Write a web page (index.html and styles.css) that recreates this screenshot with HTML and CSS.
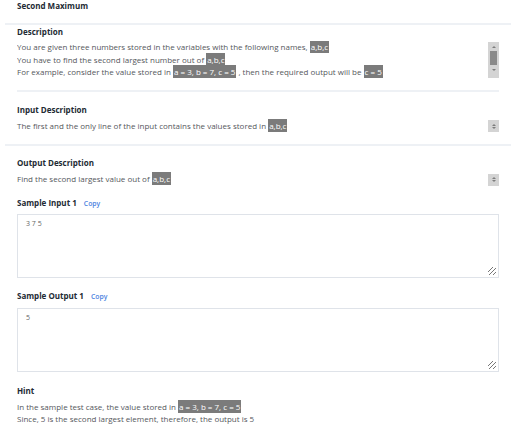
FILE: index.html
```html
<!DOCTYPE html>
<html>
<head>
<meta charset="utf-8">
<link rel="stylesheet" href="styles.css">
</head>
<body>
<div class="page">
  <div class="title">Second Maximum</div>
  <div class="rule wide"></div>

  <div class="section sec-desc">
    <div class="heading">Description</div>
    <div class="row desc-row">
      <div class="text scroll-text">
        <div>You are given three numbers stored in the variables with the following names, <span class="code">a,b,c</span></div>
        <div>You have to find the second largest number out of <span class="code">a,b,c</span></div>
        <div>For example, consider the value stored in <span class="code">a = 3, b = 7, c = 5</span> , then the required output will be <span class="code">c = 5</span></div>
      </div>
      <div class="vscroll">
        <span class="arrow up"></span>
        <span class="thumb"></span>
        <span class="arrow down"></span>
      </div>
    </div>
  </div>
  <div class="rule"></div>

  <div class="section sec-in">
    <div class="heading">Input Description</div>
    <div class="row line-row">
      <div class="text">The first and the only line of the input contains the values stored in <span class="code">a,b,c</span></div>
      <div class="spin"><span class="arrow up"></span><span class="arrow down"></span></div>
    </div>
  </div>
  <div class="rule wide"></div>

  <div class="section sec-out">
    <div class="heading">Output Description</div>
    <div class="row line-row">
      <div class="text">Find the second largest value out of <span class="code">a,b,c</span></div>
      <div class="spin"><span class="arrow up"></span><span class="arrow down"></span></div>
    </div>
  </div>

  <div class="sample sample-in">
    <div class="heading">Sample Input 1 <span class="copy">Copy</span></div>
    <div class="box">3 7 5<span class="grip"></span></div>
  </div>

  <div class="sample sample-out">
    <div class="heading">Sample Output 1 <span class="copy">Copy</span></div>
    <div class="box">5<span class="grip"></span></div>
  </div>

  <div class="section hint">
    <div class="heading">Hint</div>
    <div class="text">
      <div>In the sample test case, the value stored in <span class="code">a = 3, b = 7, c = 5</span></div>
      <div>Since, 5 is the second largest element, therefore, the output is 5</div>
    </div>
  </div>
</div>
</body>
</html>
```

FILE: styles.css
```css
html, body {
  margin: 0;
  padding: 0;
  background: #ffffff;
}
body {
  font-family: "Open Sans", "Noto Sans", sans-serif;
  font-size: 8px;
  color: #55575c;
}
.page {
  padding: 0 19px 0 17px;
}
.title {
  font-weight: 700;
  font-size: 8px;
  color: #222a33;
  line-height: 12px;
  height: 23px;
}
.rule {
  height: 2px;
  background: #eef1f5;
}
.rule.wide {
  margin: 0 -12px;
}
.heading {
  font-weight: 700;
  font-size: 8px;
  color: #222a33;
  line-height: 12px;
}
.row {
  display: flex;
  align-items: flex-start;
}
.text {
  line-height: 12.5px;
  flex: 1;
  white-space: nowrap;
}
.code {
  background: #7b7b7b;
  color: #ffffff;
  padding: 1px 1px;
}

/* description */
.sec-desc {
  padding-top: 1px;
}
.desc-row {
  margin-top: 3px;
  height: 37px;
  margin-bottom: 12px;
}
.scroll-text {
  height: 37px;
  overflow: hidden;
}
.vscroll {
  width: 11px;
  height: 36px;
  background: #d4d4d4;
  display: flex;
  flex-direction: column;
  align-items: center;
  margin-top: 1px;
}
.vscroll .thumb {
  width: 7px;
  height: 14px;
  background: #8a8a8a;
  margin: 3px 0 4px;
}
.arrow {
  width: 0;
  height: 0;
  border-left: 2.5px solid transparent;
  border-right: 2.5px solid transparent;
}
.arrow.up {
  border-bottom: 2.5px solid #7d7d7d;
}
.arrow.down {
  border-top: 2.5px solid #7d7d7d;
}
.vscroll .arrow.up {
  margin-top: 4px;
}
.spin {
  width: 11px;
  height: 12px;
  background: #d4d4d4;
  display: flex;
  flex-direction: column;
  align-items: center;
  justify-content: center;
  gap: 1px;
  margin-top: 0.5px;
}

/* input / output description */
.sec-in {
  padding-top: 12px;
}
.sec-in .line-row {
  margin-top: 3.5px;
  height: 13px;
  margin-bottom: 11px;
}
.sec-out {
  padding-top: 11px;
}
.sec-out .line-row {
  margin-top: 4.5px;
  height: 13px;
}

/* samples */
.sample-in {
  margin-top: 11px;
}
.sample-out {
  margin-top: 12px;
}
.copy {
  color: #4a7fe0;
  font-size: 6.8px;
  font-weight: 600;
  margin-left: 5px;
}
.box {
  position: relative;
  box-sizing: border-box;
  margin-top: 4px;
  height: 64px;
  border: 1px solid #dfe3e9;
  padding: 3px 8px;
  font-size: 7px;
  color: #666;
  line-height: 12px;
}
.sample-out .box {
  margin-top: 5px;
}
.grip {
  position: absolute;
  right: 2px;
  bottom: 2px;
  width: 8px;
  height: 8px;
  background: linear-gradient(135deg, transparent 0 30%, #777 30% 37%, transparent 37% 55%, #777 55% 62%, transparent 62% 80%, #777 80% 87%, transparent 87%);
}

/* hint */
.hint {
  padding-top: 13px;
}
.hint .text {
  margin-top: 3.5px;
}
```
